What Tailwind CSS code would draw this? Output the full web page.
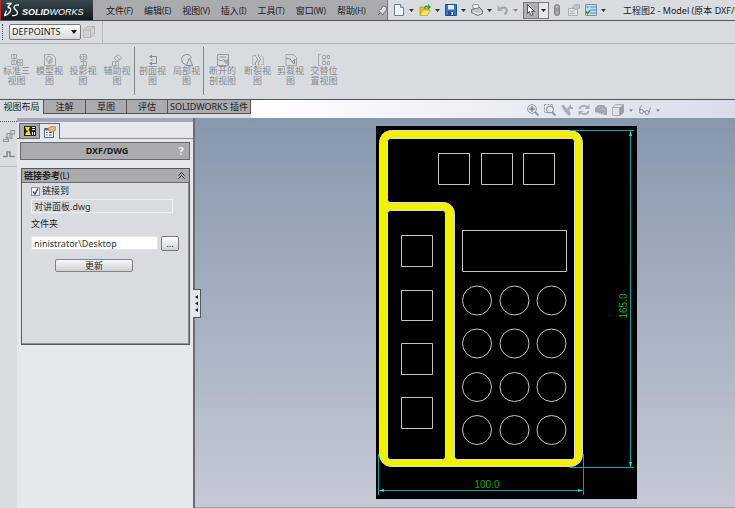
<!DOCTYPE html>
<html lang="zh-CN">

<head>
    <meta charset="UTF-8">
    <meta name="viewport" content="width=device-width, initial-scale=1.0">
    <title>工程图2 - SOLIDWORKS</title>
    <script src="https://cdn.jsdelivr.net/npm/@tailwindcss/browser@4"></script>
</head>

<body class="flex flex-col h-screen overflow-hidden bg-[#d8dbe0] text-[9px] leading-[10px] text-[#222] font-['Noto_Sans','Noto_Sans_CJK_SC',sans-serif]">

    <!-- menu bar -->
    <header class="flex h-[21px] shrink-0 border-b border-[#555] whitespace-nowrap">
        <div class="flex items-center gap-[2px] w-[93px] shrink-0 pl-[3px] border-l border-[#c22] bg-linear-to-b from-[#3b4850] to-[#10191f] text-white">
            <svg class="w-4 h-4 shrink-0" viewBox="0 0 16 16" fill="none" stroke="#fff" stroke-width="1.3">
                <path d="M2.500 1.500h4.500L4 5M3.500 5.500c4 0 3.500 3 2 5S2.500 13.500.5 13.500L2.500 8.500M15 3c-3-.5-5 .5-5 2.500s3.500 3 3.500 5-2 3.500-5.500 3" />
            </svg>
            <span class="font-['Liberation_Sans',sans-serif] italic text-[9px] pt-1"><b>SOLID</b>WORKS</span>
        </div>
        <nav class="flex items-center gap-[11px] w-[295px] shrink-0 pl-[13px] pt-px bg-[#a9abaf] border-r border-[#77797c]">
            <button>文件<span class="text-[8px]">(F)</span></button>
            <button>编辑<span class="text-[8px]">(E)</span></button>
            <button>视图<span class="text-[8px]">(V)</span></button>
            <button>插入<span class="text-[8px]">(I)</span></button>
            <button>工具<span class="text-[8px]">(T)</span></button>
            <button>窗口<span class="text-[8px]">(W)</span></button>
            <button>帮助<span class="text-[8px]">(H)</span></button>
            <button class="shrink-0" aria-label="pin">
                <svg class="w-[10px] h-[11px]" viewBox="0 0 10 11">
                    <path d="M1 10l3-3" stroke="#555" />
                    <path d="M1.500 5.500c1-1 2-1 2.500-1L6 1l3.500 1v3L7 7.500c0 1-.5 2-1 2.500z" fill="#d8dade" stroke="#666" stroke-width=".8" />
                    <path d="M5 5l2-3" stroke="#fff" />
                </svg>
            </button>
        </nav>
        <div class="flex items-center flex-1 min-w-0 pl-[5px]">
            <button class="w-[26px] shrink-0 flex items-center gap-1" aria-label="new">
                <svg class="w-3 h-3" viewBox="0 0 12 12"><path d="M1.500.5h6l3 3v8h-9z" fill="#eef5fb" stroke="#6b7f90" /><path d="M7.500.5v3h3" fill="#b8cbd8" stroke="#6b7f90" stroke-width=".8" /></svg>
                <svg class="w-[5px] h-[3px]" viewBox="0 0 5 3"><path d="M0 0h5L2.500 3z" fill="#333" /></svg>
            </button>
            <button class="w-[26px] shrink-0 flex items-center gap-1" aria-label="open">
                <svg class="w-3 h-3" viewBox="0 0 12 12"><path d="M1 11V3h3l1 1.500h4V7" fill="#e8c030" stroke="#a88010" stroke-width=".6" /><path d="M1 11.500L3.500 6H11l-2.500 5.500z" fill="#fbe36a" stroke="#b08c18" stroke-width=".6" /><path d="M5 4c0-3 3-3 4-2V0l3 3-3 3V4C8 3 6.500 3 6 4.500z" fill="#2ba52b" /></svg>
                <svg class="w-[5px] h-[3px]" viewBox="0 0 5 3"><path d="M0 0h5L2.500 3z" fill="#333" /></svg>
            </button>
            <button class="w-[26px] shrink-0 flex items-center gap-1" aria-label="save">
                <svg class="w-3 h-3" viewBox="0 0 12 12"><path d="M.5.5h11v11h-11z" fill="#3473d0" stroke="#204c9c" /><path d="M3 1h6v4.500H3z" fill="#dfe9f6" /><path d="M3 7.500h6V11H3z" fill="#244a8a" /><path d="M6.500 8h1.500v3H6.500z" fill="#fff" /></svg>
                <svg class="w-[5px] h-[3px]" viewBox="0 0 5 3"><path d="M0 0h5L2.500 3z" fill="#333" /></svg>
            </button>
            <button class="w-[26px] shrink-0 flex items-center gap-1" aria-label="print">
                <svg class="w-3 h-3" viewBox="0 0 12 12"><path d="M2.500 5L1.500 1 7 .5 9 5" fill="#fff" stroke="#777" stroke-width=".8" /><path d="M.5 5.500l8-2 3 3v3l-5 2-6-3z" fill="#bfc4ca" stroke="#555" stroke-width=".8" /><path d="M2 8l5 2 4-1.500" fill="none" stroke="#fff" /></svg>
                <svg class="w-[5px] h-[3px]" viewBox="0 0 5 3"><path d="M0 0h5L2.500 3z" fill="#333" /></svg>
            </button>
            <button class="w-[26px] shrink-0 flex items-center gap-1" aria-label="undo">
                <svg class="w-3 h-3" viewBox="0 0 12 12"><path d="M2 4.500h2c5-3.500 8 2 3.500 6" fill="none" stroke="#9fa2a7" stroke-width="2" /><path d="M.5 1v6h5z" fill="#a9acb1" /></svg>
                <svg class="w-[5px] h-[3px]" viewBox="0 0 5 3"><path d="M0 0h5L2.500 3z" fill="#888" /></svg>
            </button>
            <button class="flex shrink-0 w-[26px] h-[17px] border border-[#77797c] mr-[5px]" aria-label="select">
                <span class="flex items-center justify-center w-[15px] h-full bg-[#aeb0b4] border-r border-[#77797c]">
                    <svg class="w-2 h-3" viewBox="0 0 8 12"><path d="M.5.5v9l2-2 1.500 4 2-1-1.500-3h3z" fill="#fff" stroke="#333" stroke-width=".8" /></svg>
                </span>
                <span class="flex items-center justify-center flex-1 h-full bg-[#e6e8eb]">
                    <svg class="w-[5px] h-[3px]" viewBox="0 0 5 3"><path d="M0 0h5L2.500 3z" fill="#222" /></svg>
                </span>
            </button>
            <button class="shrink-0 mr-2" aria-label="rebuild">
                <svg class="w-[6px] h-3" viewBox="0 0 6 12"><rect x=".5" y=".5" width="5" height="11" rx="2.500" fill="#94979b" stroke="#808388" /><circle cx="3" cy="3" r="1.300" fill="#b8babd" /><circle cx="3" cy="8.500" r="1.300" fill="#b8babd" /></svg>
            </button>
            <button class="shrink-0 mr-[5px]" aria-label="properties">
                <svg class="w-3 h-3" viewBox="0 0 12 12" fill="#e2e4e7" stroke="#a5a8ad" stroke-width=".9"><path d="M.5 4.500h9v7h-9z" /><path d="M4 3.500L7 .5l4.500.5v3L8 5.500z" fill="#bfc2c6" /><path d="M2 7h5M2 9.500h5" /></svg>
            </button>
            <button class="flex shrink-0 items-center gap-1 w-[34px]" aria-label="options">
                <svg class="w-3 h-3" viewBox="0 0 12 12"><path d="M.5.5h11v11H.5z" fill="#c4dcee" stroke="#7a94aa" /><path d="M5 3h6M5 6h6M5 9h6" stroke="#6d8dab" /><path d="M1.500 3h2" stroke="#496a88" /><path d="M1 7.500l1.500 2L5 6.500" fill="none" stroke="#1a9c1a" stroke-width="1.500" /></svg>
                <svg class="w-[5px] h-[3px]" viewBox="0 0 5 3"><path d="M0 0h5L2.500 3z" fill="#333" /></svg>
            </button>
            <span class="pl-1 pt-px">工程图2 - Model (原本 DXF/DWG)</span>
        </div>
    </header>

    <!-- layer bar -->
    <div class="flex items-center h-[23px] shrink-0 border-b border-[#b0b2b3]">
        <div class="w-[3px] h-4 border-r border-dotted border-[#555] mr-[6px]"></div>
        <div class="relative">
            <select aria-label="图层" class="block appearance-none w-[72px] h-4 pl-[2px] border border-[#77797c] rounded-[2px] bg-linear-to-b from-white to-[#d6d8db] text-[9px] leading-[14px]">
                <option>DEFPOINTS</option>
            </select>
            <svg class="absolute right-1 top-[6px] w-[6px] h-1 pointer-events-none" viewBox="0 0 6 4"><path d="M0 0h6L3 4z" fill="#111" /></svg>
        </div>
        <button class="ml-[2px]" aria-label="layer">
            <svg class="w-3 h-3" viewBox="0 0 12 12" fill="#d0d2d5" stroke="#b0b2b5" stroke-width=".9"><path d="M.5 4l4-3.500h7V8l-4 3.500h-7z" /><path d="M.5 4h7v7.500M7.500 4l4-3.500" fill="none" /></svg>
        </button>
        <div class="w-px h-full bg-[#b9bbbe] ml-[7px]"></div>
    </div>

    <!-- ribbon -->
    <div class="flex items-start h-[56px] shrink-0 pt-[3px] border-b border-[#555] text-[#898b8e] text-center">
        <button class="w-[33px] flex flex-col items-center pt-[7px]">
            <svg class="w-3 h-3" viewBox="0 0 12 12" fill="none" stroke="#a4a6a9"><path d="M.5.5h5v4h-5zM.5 6.500h5v4h-5zM6.500 5.500h5v6h-5zM3 0v11M7 8.500h5M9 6v5" /></svg>
            <span class="w-[28px]">标准三视图</span>
        </button>
        <button class="w-[33px] flex flex-col items-center pt-[7px]">
            <svg class="w-3 h-3" viewBox="0 0 12 12" fill="none" stroke="#a4a6a9"><path d="M.5.5h8l3 3v8H.5z" /><circle cx="5" cy="5" r="2.500" /><path d="M4 8l4-4v4l-3 2z" fill="#b8babd" /></svg>
            <span class="w-[28px]">模型视图</span>
        </button>
        <button class="w-[34px] flex flex-col items-center pt-[7px]">
            <svg class="w-3 h-3" viewBox="0 0 12 12" fill="none" stroke="#a4a6a9"><path d="M3.500.5h6v5h-6zM3.500 7.500h6v4h-6M6.500 0v12M2 3h8" /></svg>
            <span class="w-[28px]">投影视图</span>
        </button>
        <button class="w-[34px] flex flex-col items-center pt-[7px]">
            <svg class="w-3 h-3" viewBox="0 0 12 12" fill="none" stroke="#a4a6a9"><path d="M3 4l4-3.500L11 4 7 7.500zM1.500 7.500h6v4h-6zM4.500 7v4M5 2l4 4" /></svg>
            <span class="w-[28px]">辅助视图</span>
        </button>
        <div class="w-px h-12 bg-[#808285]"></div>
        <button class="w-[35px] flex flex-col items-center pt-[7px]">
            <svg class="w-3 h-3" viewBox="0 0 12 12" fill="none" stroke="#8a8c8f"><path d="M4 2.500h5.500v7H4M3.500 6h3" /><path d="M5 .5l-3 2 3 2zM5 7.500l-3 2 3 2z" fill="#8a8c8f" stroke="none" /></svg>
            <span class="w-[28px]">剖面视图</span>
        </button>
        <button class="w-[33px] flex flex-col items-center pt-[7px]">
            <svg class="w-3 h-3" viewBox="0 0 12 12" fill="none" stroke="#8a8c8f"><path d="M5 10.500A5 5 0 1 1 10.500 4M5.500 11.500L8.500 4l3 7.500M5 11.500h7" /></svg>
            <span class="w-[28px]">局部视图</span>
        </button>
        <div class="w-px h-12 bg-[#808285]"></div>
        <button class="w-[37px] flex flex-col items-center pt-[7px]">
            <svg class="w-3 h-3" viewBox="0 0 12 12" fill="none" stroke="#96989b"><path d="M.5.5h11v11H.5zM3 3h6M.5 5l4 2 2-2 5 6" /><path d="M6 7l5 4V5z" fill="#a4a6a9" stroke="none" /></svg>
            <span class="w-[28px]">断开的剖视图</span>
        </button>
        <button class="w-[33px] flex flex-col items-center pt-[7px]">
            <svg class="w-3 h-3" viewBox="0 0 12 12" fill="none" stroke="#8a8c8f"><path d="M4 .5c-2 2.500 3 3.500 1 6s-2 3-1 5M7 .5c-2 2.500 3 3.500 1 6s-2 3-1 5" /><path d="M3 1.500H.5v9h2M9 1.500l2.500 2v7H9" stroke="#b0b2b5" /></svg>
            <span class="w-[28px]">断裂视图</span>
        </button>
        <button class="w-[33px] flex flex-col items-center pt-[7px]">
            <svg class="w-3 h-3" viewBox="0 0 12 12" fill="none" stroke="#a4a6a9"><path d="M1 .5h7l3.500 3v8H1z" /><path d="M1 4l4 1 4 5 1-5-3 3" stroke="#8a8c8f" /></svg>
            <span class="w-[28px]">剪裁视图</span>
        </button>
        <button class="w-[34px] flex flex-col items-center pt-[7px]">
            <svg class="w-3 h-3" viewBox="0 0 12 12" fill="none" stroke="#a4a6a9"><path d="M2.500.5h-2v11h2M4.500 1.500h3v3h-3zM8 3h1.500M9.500 1.500h2v3h-2zM4.500 7.500h3v3h-3zM8 9h1.500M9.500 7.500h2v3h-2zM6 4.500v3" /></svg>
            <span class="w-[28px]">交替位置视图</span>
        </button>
    </div>

    <!-- command tabs + view toolbar -->
    <div class="flex h-[18px] shrink-0">
        <div class="flex items-start shrink-0 whitespace-nowrap">
            <button class="w-[43px] h-[14px] bg-[#d8dbe0]">视图布局</button>
            <button class="w-[42px] h-[14px] bg-[#a9abaf] border-l border-b border-[#555]">注解</button>
            <button class="w-[41px] h-[14px] bg-[#a9abaf] border-l border-b border-[#555]">草图</button>
            <button class="w-[41px] h-[14px] bg-[#a9abaf] border-l border-b border-[#555]">评估</button>
            <button class="w-[84px] h-[14px] bg-[#a9abaf] border-x border-b border-[#555]">SOLIDWORKS 插件</button>
        </div>
        <div class="flex items-center justify-end gap-[5px] flex-1 pt-[2px] pr-[74px] bg-linear-to-r from-white to-[#d9ddea]">
            <button aria-label="zoom to fit"><svg class="w-3 h-3" viewBox="0 0 12 12"><path d="M8 8l3.500 3.500" stroke="#7a9fd8" stroke-width="2" /><circle cx="5" cy="5" r="4.300" fill="#eef1f5" stroke="#8a8e94" /><path d="M5 2v6M2 5h6" stroke="#666" /><path d="M3.500 3.500h3v3h-3z" fill="#888" /></svg></button>
            <button aria-label="zoom area"><svg class="w-3 h-3" viewBox="0 0 12 12"><path d="M8 8l3.500 3.500" stroke="#7a9fd8" stroke-width="2" /><path d="M.5.5h8v8h-8z" fill="none" stroke="#999" stroke-dasharray="2 1" /><circle cx="6" cy="5.500" r="3.500" fill="#e4e8ee" stroke="#85898f" /></svg></button>
            <button aria-label="previous view"><svg class="w-3 h-3" viewBox="0 0 12 12" fill="#a9acb3"><path d="M0 1.500L3 1l3 4 4-5v3h2v2H9L8 6l2 4-2 2-4-4z" /></svg></button>
            <button aria-label="rotate"><svg class="w-3 h-3" viewBox="0 0 12 12" fill="none" stroke="#a9acb3" stroke-width="1.800"><path d="M1.500 5c1-4 6-4 8-1.500M10.500 7c-1 4-6 4-8 1.500" /><path d="M11.500 0v5h-5zM.5 12V7h5z" fill="#a9acb3" stroke="none" /></svg></button>
            <button aria-label="3d view"><svg class="w-3 h-3" viewBox="0 0 12 12" fill="#a3a6ad"><path d="M0 4l3-3h6l3 3v7H9l-1-2-1 2-2-2-1 1-1-2-1 1-2-1z" /><path d="M3 4l2-1.500M6 5h4" stroke="#c4c7ce" /></svg></button>
            <button class="flex items-center gap-[5px] w-[22px]" aria-label="display style"><svg class="w-3 h-3" viewBox="0 0 12 12"><path d="M.5 3.500l3-3h8v8l-3 3h-8z" fill="#e0e2e8" stroke="#a9acb3" /><path d="M7.500 3.500l4-3v8l-4 3z" fill="#9a9da4" /><path d="M.5 3.500h7v8" fill="none" stroke="#a9acb3" /></svg><svg class="w-1 h-[3px]" viewBox="0 0 5 3"><path d="M0 0h5L2.500 3z" fill="#888" /></svg></button>
            <button class="flex items-center gap-[5px] w-[22px]" aria-label="hide show"><svg class="w-3 h-3" viewBox="0 0 12 12" fill="none" stroke="#85898f"><circle cx="2.500" cy="7.500" r="2" /><circle cx="8" cy="8.500" r="2" /><path d="M.5 7c0-3 1-4.500 2.500-5.500M10 8.500c.5-3 .5-4 2-5M4.500 7.500l1.500.5" /></svg><svg class="w-1 h-[3px]" viewBox="0 0 5 3"><path d="M0 0h5L2.500 3z" fill="#888" /></svg></button>
        </div>
    </div>

    <main class="flex flex-1 min-h-0">
        <!-- docked strip -->
        <aside class="w-[17px] shrink-0 flex flex-col items-center pt-[3px] gap-2">
            <div class="w-full border-t border-dotted border-[#555]"></div>
            <svg class="w-3 h-3" viewBox="0 0 12 12" fill="none" stroke="#97999d" stroke-width="1.200"><path d="M4 9V3.500h3v5h2V3M.5 9.500h5v2h-5zM2 7.500h3v2" /><path d="M8 .5h3.500V4H8z" /></svg>
            <svg class="w-3 h-2" viewBox="0 0 12 8" fill="none" stroke="#85878b" stroke-width="1.500"><path d="M0 6.500h4V2h3v4.500h5" /></svg>
            <div class="w-full border-t border-[#b9bbbe]"></div>
        </aside>

        <!-- property manager -->
        <aside class="relative w-[178px] shrink-0 flex flex-col bg-[#e4e7eb] border-r-2 border-[#6a6c6e]">
            <div class="h-1 shrink-0 bg-[#a3a6ba]"></div>
            <div class="flex h-[17px] shrink-0 items-end">
                <div class="w-[2px] border-b border-[#66686b]"></div>
                <button class="w-[21px] h-4 flex items-center justify-center bg-[#a9abaf] border border-[#66686b]" aria-label="feature tree">
                    <svg class="w-3 h-3" viewBox="0 0 12 12"><path d="M0 1h12v10H0z" fill="#222" /><path d="M1 2h5L4.500 5.500H2.500zM3.500 5.500h2V7h-2zM1 10l1.500-3h3L7 10z" fill="#f2e23a" /><path d="M8 2h3v3H8zM8 7h3v3H8z" fill="#e8eaed" /><path d="M8 3.500h3M9.500 7v3" stroke="#222" /></svg>
                </button>
                <button class="w-5 h-4 flex items-center justify-center bg-[#e4e7eb] border-t border-r border-[#66686b]" aria-label="property manager">
                    <svg class="w-3 h-3" viewBox="0 0 12 12"><path d="M.5 2.500h9v9h-9z" fill="#fff" stroke="#51688c" /><path d="M1 3h8v1.500H1z" fill="#4a72b8" /><path d="M2 6.500h1.500M5 6.500h3M2 9h1.500M5 9h3" stroke="#555" /><path d="M4 2.500L7 .5l5 .5v3L8.500 6 4.500 4.500z" fill="#e8b878" stroke="#96683a" stroke-width=".6" /></svg>
                </button>
                <div class="flex-1 border-b border-[#8a8c8f]"></div>
            </div>
            <div class="flex items-center h-[18px] shrink-0 mt-[3px] mx-[3px] bg-[#a9abaf] border border-[#66686b]">
                <h1 class="flex-1 text-center font-bold pl-5">DXF/DWG</h1>
                <button class="w-4 font-bold text-[11px] text-[#eee]" aria-label="help">?</button>
            </div>
            <section class="flex flex-col h-[177px] shrink-0 mt-2 ml-1 mr-[3px] border border-[#55575a] bg-[#d8dbe0] shadow-[inset_-1px_-1px_0_#909296]">
                <div class="flex items-center justify-between h-[14px] shrink-0 pl-[2px] pr-1 bg-[#a9abaf] border-b border-[#66686b]">
                    <h2 class="font-bold">链接参考<span class="text-[8px] font-medium">(L)</span></h2>
                    <svg class="w-[7px] h-[7px]" viewBox="0 0 7 7" fill="none" stroke="#222"><path d="M.5 3.500l3-3 3 3M.5 6.500l3-3 3 3" /></svg>
                </div>
                <div class="flex flex-col pl-[9px] pt-[3px]">
                    <label class="flex items-center gap-[2px] h-[10px]">
                        <input type="checkbox" checked class="peer appearance-none w-[9px] h-[9px] border border-[#8a96a8] bg-white checked:bg-[linear-gradient(#fff,#e8ecf4)]">
                        <svg class="w-[7px] h-[7px] -ml-[10px] mr-px pointer-events-none invisible peer-checked:visible" viewBox="0 0 7 7" fill="none" stroke="#2c4a9c" stroke-width="1.400"><path d="M1 3.500L3 6l3-5.500" /></svg>
                        链接到
                    </label>
                    <input type="text" readonly aria-label="链接到文件" value="对讲面板.dwg" class="w-[142px] h-[14px] mt-[3px] px-[2px] border border-[#eef0f2] bg-[#d8dbe0] text-[9px] text-[#333]">
                    <label for="folder" class="mt-[6px] h-[10px]">文件夹</label>
                    <div class="flex items-start gap-[3px] mt-[7px]">
                        <input id="folder" type="text" value="ninistrator\Desktop" class="w-[127px] h-[14px] px-[2px] bg-white border border-[#e2e4e8] text-[9px] text-[#333]">
                        <button class="w-[18px] h-[15px] border border-[#77797c] rounded-[2px] bg-linear-to-b from-white to-[#cfd1d4]">...</button>
                    </div>
                    <button class="w-[78px] h-[13px] mt-2 ml-6 border border-[#808285] rounded-[2px] bg-linear-to-b from-[#f6f7f8] to-[#cfd1d4]">更新</button>
                </div>
            </section>
            <!-- splitter handle over the canvas edge -->
            <button class="absolute left-full top-[171px] w-2 h-[29px] flex flex-col items-center justify-center bg-[#e4e7eb] border border-l-0 border-[#55575a]" aria-label="collapse">
                <svg class="w-[3px] h-[17px]" viewBox="0 0 3 17" fill="#222"><path d="M3 0v4L0 2zM3 6.500v4L0 8.500zM3 13v4L0 15z" /></svg>
            </button>
        </aside>

        <!-- drawing area -->
        <section class="flex-1 min-w-0 pt-2 pl-[181px] bg-linear-to-b from-[#8798ad] to-[#c5c9d5] border-b border-[#9a9ca8]">
            <svg class="w-[261px] h-[373px]" viewBox="376 126 261 373" fill="none" font-family="Liberation Sans, sans-serif" font-size="10">
                <path d="M376 126h261v373H376z" fill="#000" />
                <rect x="379.500" y="130.500" width="203" height="336" rx="12" fill="#f0f000" stroke="#ddd" />
                <g fill="#000" stroke="#ddd">
                    <path d="M390.500 138.500H571.500a3 3 0 0 1 3 3V456.500a3 3 0 0 1-3 3H457.500a3 3 0 0 1-3-3V213.500a11 11 0 0 0-11-11H390.500a3 3 0 0 1-3-3V141.500a3 3 0 0 1 3-3z" />
                    <rect x="387.500" y="210.500" width="58" height="249" rx="3" />
                </g>
                <g stroke="#c4c4c4">
                    <path d="M438.500 153.500h31v31h-31zM481.500 153.500h31v31h-31zM523.500 153.500h31v31h-31z" />
                    <path d="M401.500 235.500h31v31h-31zM401.500 290.500h31v30h-31zM401.500 343.500h31v31h-31zM401.500 397.500h31v31h-31z" />
                    <path d="M462.500 230.500h104v41h-104z" />
                    <circle cx="477" cy="300.500" r="14.500" /><circle cx="514.500" cy="300.500" r="14.500" /><circle cx="551.500" cy="300.500" r="14.500" />
                    <circle cx="477" cy="343.500" r="14.500" /><circle cx="514.500" cy="343.500" r="14.500" /><circle cx="551.500" cy="343.500" r="14.500" />
                    <circle cx="477" cy="387" r="14.500" /><circle cx="514.500" cy="387" r="14.500" /><circle cx="551.500" cy="387" r="14.500" />
                    <circle cx="477" cy="430" r="14.500" /><circle cx="514.500" cy="430" r="14.500" /><circle cx="551.500" cy="430" r="14.500" />
                </g>
                <g stroke="#00a8a8">
                    <path d="M570 130.500h64M570 467.500h64M630.500 131v336M379.500 490.500h203M378.500 454v41M583.500 454v41" />
                    <path d="M630.500 131l-1.500 5h3zM630.500 467l-1.500-5h3zM379 490.500l5-1.500v3zM583 490.500l-5-1.500v3z" fill="#00f0f0" stroke="none" />
                </g>
                <g fill="#00b400" text-anchor="middle">
                    <text x="487" y="488">100.0</text>
                    <text x="0" y="0" transform="translate(627 306) rotate(-90)">165.0</text>
                </g>
            </svg>
        </section>
    </main>
</body>

</html>
